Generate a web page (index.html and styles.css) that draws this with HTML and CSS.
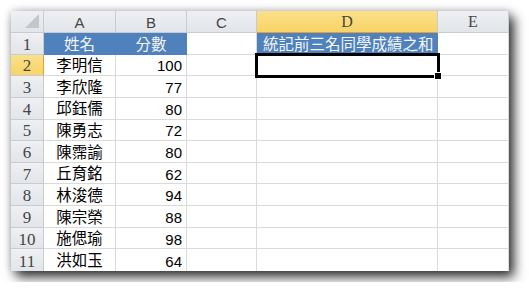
FILE: index.html
```html
<!DOCTYPE html>
<html>
<head>
    <title>成績表</title>
    <link rel="stylesheet" href="styles.css">
</head>
<body>
    <div class="sheet">
        <!-- Column headers -->
        <div class="corner"></div>
        <div class="col-head">A</div>
        <div class="col-head">B</div>
        <div class="col-head">C</div>
        <div class="col-head serif active-head">D</div>
        <div class="col-head serif">E</div>

        <!-- Row 1 -->
        <div class="row-head">1</div>
        <div class="cell title center">姓名</div>
        <div class="cell title center">分數</div>
        <div class="cell"></div>
        <div class="cell title wide">統記前三名同學成績之和</div>
        <div class="cell"></div>

        <!-- Row 2 -->
        <div class="row-head active-row">2</div>
        <div class="cell center">李明信</div>
        <div class="cell num">100</div>
        <div class="cell"></div>
        <div class="cell selected"></div>
        <div class="cell"></div>

        <div class="row-head">3</div>
        <div class="cell center">李欣隆</div>
        <div class="cell num">77</div>
        <div class="cell"></div><div class="cell"></div><div class="cell"></div>

        <div class="row-head">4</div>
        <div class="cell center">邱鈺儒</div>
        <div class="cell num">80</div>
        <div class="cell"></div><div class="cell"></div><div class="cell"></div>

        <div class="row-head">5</div>
        <div class="cell center">陳勇志</div>
        <div class="cell num">72</div>
        <div class="cell"></div><div class="cell"></div><div class="cell"></div>

        <div class="row-head">6</div>
        <div class="cell center">陳霈諭</div>
        <div class="cell num">80</div>
        <div class="cell"></div><div class="cell"></div><div class="cell"></div>

        <div class="row-head">7</div>
        <div class="cell center">丘育銘</div>
        <div class="cell num">62</div>
        <div class="cell"></div><div class="cell"></div><div class="cell"></div>

        <div class="row-head">8</div>
        <div class="cell center">林浚德</div>
        <div class="cell num">94</div>
        <div class="cell"></div><div class="cell"></div><div class="cell"></div>

        <div class="row-head">9</div>
        <div class="cell center">陳宗榮</div>
        <div class="cell num">88</div>
        <div class="cell"></div><div class="cell"></div><div class="cell"></div>

        <div class="row-head">10</div>
        <div class="cell center">施偲瑜</div>
        <div class="cell num">98</div>
        <div class="cell"></div><div class="cell"></div><div class="cell"></div>

        <div class="row-head last">11</div>
        <div class="cell center last">洪如玉</div>
        <div class="cell num last">64</div>
        <div class="cell last"></div><div class="cell last"></div><div class="cell last"></div>
    </div>
</body>
</html>
```

FILE: styles.css
```css
body {
    margin: 0;
    padding: 11px;
    background: #fff;
    font-family: "Liberation Sans", "Noto Sans CJK TC", sans-serif;
}

.sheet {
    width: 498px;
    height: 260px;
    display: grid;
    grid-template-columns: 33px 72px 71px 70px 181px 71px;
    grid-template-rows: 22px repeat(11, minmax(0, 1fr));
    background: #fff;
    line-height: 1;
    box-shadow: 5px 6px 11px rgba(0, 0, 0, 0.8), 0 0 8px rgba(0, 0, 0, 0.2);
}

.corner, .col-head, .row-head {
    background: linear-gradient(#eef0f3, #e2e5e9);
    border-right: 1px solid #c8ccd2;
    border-bottom: 1px solid #c8ccd2;
    color: #454545;
    display: flex;
    align-items: center;
    justify-content: center;
    box-sizing: border-box;
}

.corner {
    position: relative;
}

.corner::after {
    content: "";
    position: absolute;
    right: 4px;
    bottom: 4px;
    border-left: 14px solid transparent;
    border-bottom: 14px solid #c3c6ca;
}

.col-head {
    font-size: 15px;
    padding-top: 1px;
}

.row-head {
    font-family: "Liberation Serif", serif;
    font-size: 17px;
    padding-top: 2px;
}

.serif {
    font-family: "Liberation Serif", serif;
    font-size: 16px;
}

.active-head {
    background: linear-gradient(#fbe08a, #f8d466);
    border-bottom: 1px solid #e0a040;
}

.active-row {
    background: linear-gradient(#fbe08a, #f8d466);
    border-right: 1px solid #e0a040;
}

.cell {
    border-right: 1px solid #dadada;
    border-bottom: 1px solid #dadada;
    box-sizing: border-box;
    display: flex;
    align-items: center;
    font-size: 15.5px;
    color: #000;
    padding: 2px 4px 0;
    white-space: nowrap;
}

.center {
    justify-content: center;
}

.num {
    justify-content: flex-end;
    font-size: 15px;
}

.title {
    background: #4f81bd;
    color: #f4f4f4;
    border-color: #4f81bd;
}

.wide {
    padding: 2px 0 0 6px;
}

.selected {
    position: relative;
    outline: 3px solid #000;
    outline-offset: -1px;
    z-index: 1;
}

.selected::after {
    content: "";
    position: absolute;
    right: -5px;
    bottom: -5px;
    width: 6px;
    height: 6px;
    background: #000;
    border: 1px solid #fff;
}

.last {
    border-bottom: none;
}
```
